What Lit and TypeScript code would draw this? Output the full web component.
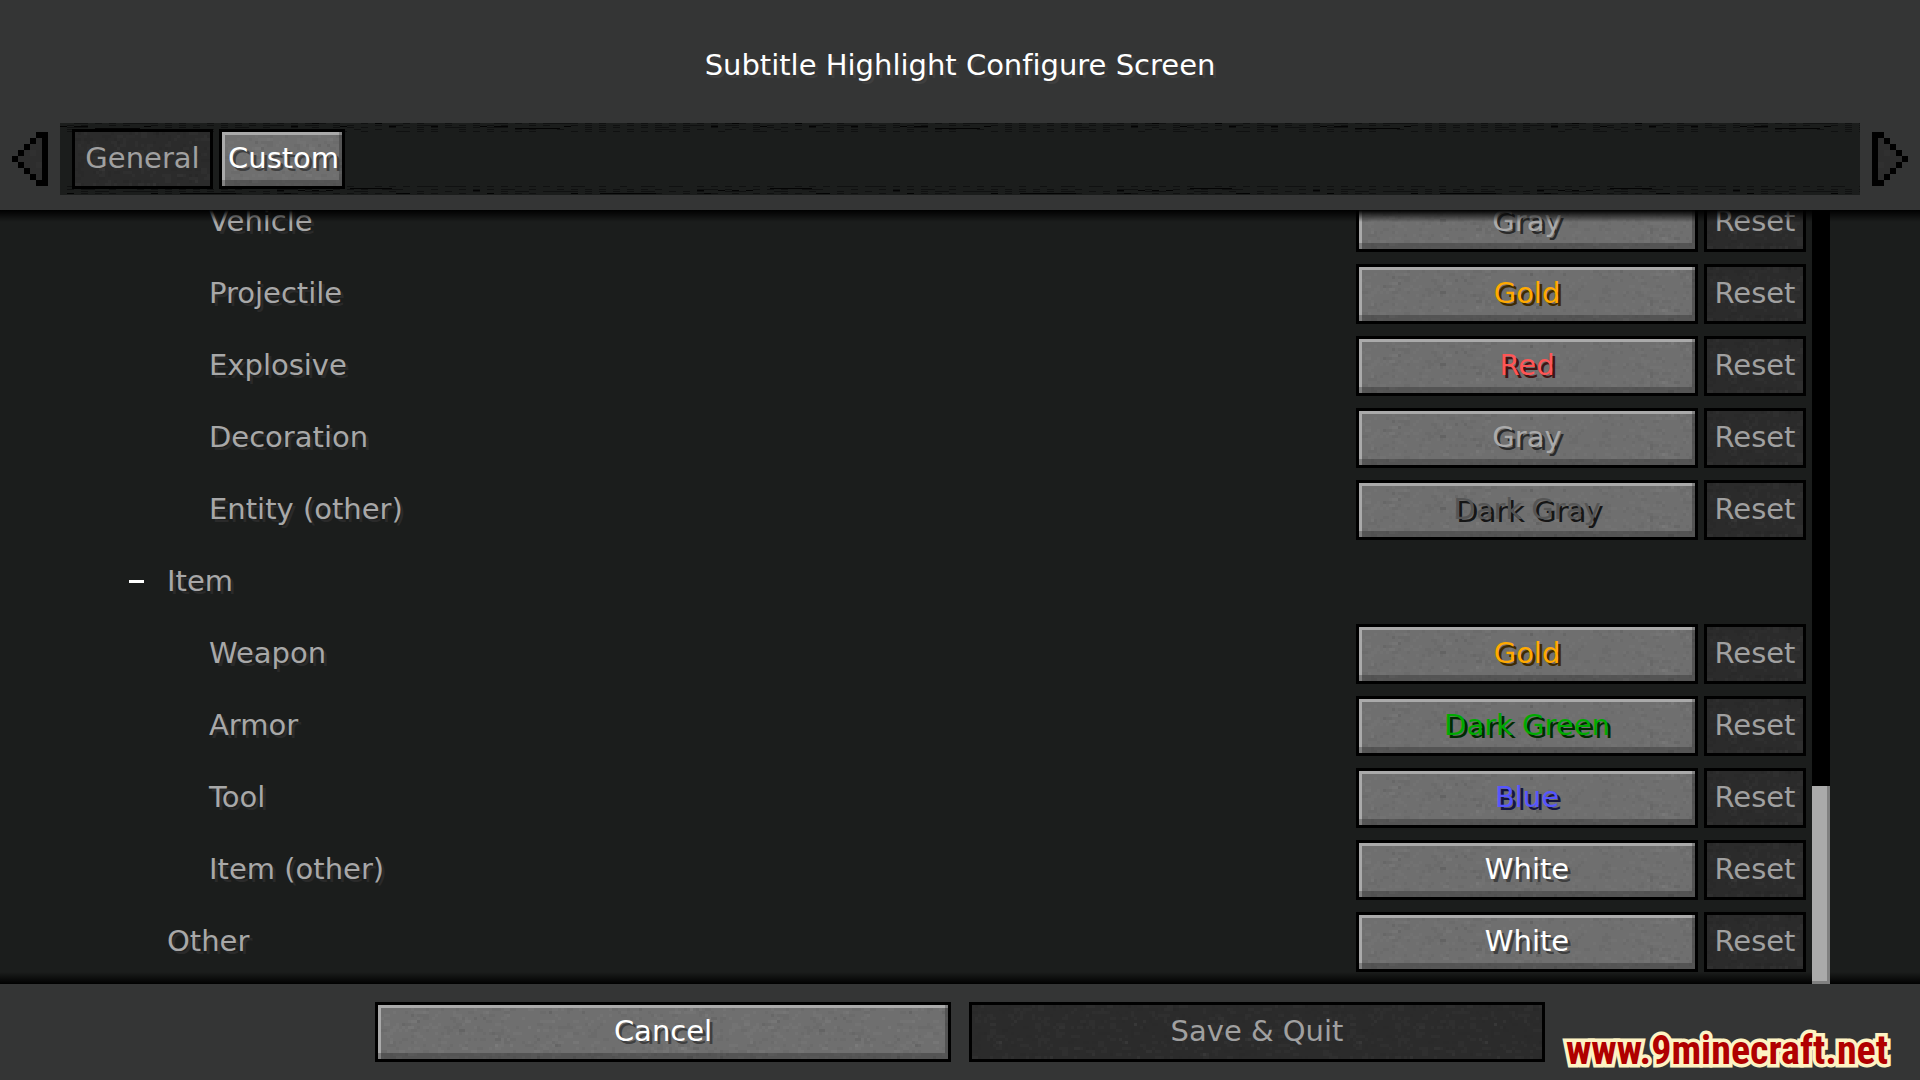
import { LitElement, html, css, svg, unsafeCSS } from "lit";
import { customElement, property, state } from "lit/decorators.js";

/* Seeded generator, so that the stone grain is the same on every load. */
function seeded(seed: number): () => number {
  let s = seed;
  return () => {
    s = (s * 1664525 + 1013904223) % 4294967296;
    return s / 4294967296;
  };
}

function svgUrl(width: number, height: number, body: string): string {
  const source = `<svg xmlns="http://www.w3.org/2000/svg" width="${width}" height="${height}" shape-rendering="crispEdges">${body}</svg>`;
  return `url("data:image/svg+xml,${encodeURIComponent(source)}")`;
}

/* Grain made of 3px blocks in light and dark shades. */
function stone(seed: number, strength: number): string {
  const rnd = seeded(seed);
  const shades = [
    { fill: "#000", opacity: 0.05, share: 0.16 },
    { fill: "#000", opacity: 0.1, share: 0.02 },
    { fill: "#fff", opacity: 0.04, share: 0.16 },
    { fill: "#fff", opacity: 0.07, share: 0.02 },
  ];
  let body = "";
  for (const shade of shades) {
    let d = "";
    for (let y = 0; y < 20; y++) {
      for (let x = 0; x < 120; x++) {
        if (rnd() < shade.share * 0.7) {
          const w = rnd() < 0.35 ? 6 : 3;
          d += `M${x * 3} ${y * 3}h${w}v3h-${w}z`;
        }
      }
    }
    body += `<path d="${d}" fill="${shade.fill}" fill-opacity="${shade.opacity * strength}"/>`;
  }
  return svgUrl(360, 60, body);
}

/* Short dashes along the upper and lower edge of the tab strip. */
function frayed(): string {
  const rnd = seeded(77);
  let faint = "";
  let strong = "";
  for (let x = 0; x < 420; x += 7) {
    const odd = (x / 7) % 2 === 1;
    for (const y of [0, 2, 4, 6, 8, 63, 66, 68, 70]) {
      if (rnd() < (odd ? 0.75 : 0.15)) faint += `M${x} ${y}h7v1h-7z`;
    }
    if (rnd() < 0.25) strong += `M${x} ${rnd() < 0.5 ? 0 : 3}h7v1h-7z`;
    if (rnd() < 0.2) strong += `M${x} ${rnd() < 0.5 ? 67 : 70}h7v1h-7z`;
  }
  strong += "M35 5h45v1h-45zM120 70h56v1h-56zM290 65h42v1h-42z";
  return svgUrl(
    420,
    72,
    `<path d="${faint}" fill="#000" fill-opacity=".4"/><path d="${strong}" fill="#000" fill-opacity=".85"/>`
  );
}

const stoneLight = unsafeCSS(stone(11, 0.7));
const stoneDark = unsafeCSS(stone(23, 0.5));
const strip = unsafeCSS(frayed());

@customElement("stone-button")
export class StoneButton extends LitElement {
  @property() tint = "white";
  @property() name = "";
  @property({ type: Boolean }) disabled = false;

  static styles = css`
    :host {
      display: block;
    }
    .button {
      display: block;
      box-sizing: border-box;
      width: 100%;
      height: 60px;
      margin: 0;
      padding: 0 6px 2px;
      border: 3px solid #000;
      border-radius: 0;
      background: #6f6f6f ${stoneLight};
      box-shadow: inset -3px -6px 0 rgba(0, 0, 0, 0.24), inset 3px 3px 0 #aaa;
      font: inherit;
      line-height: 48px;
      color: #fff;
      text-shadow: 3px 3px 0 #3f3f3f;
      text-align: center;
      white-space: nowrap;
      cursor: pointer;
    }
    .button:disabled {
      background: #2b2b2b ${stoneDark};
      box-shadow: none;
      color: #a0a0a0;
      text-shadow: none;
      cursor: default;
    }
    .gold {
      color: #ffaa00;
      text-shadow: 3px 3px 0 #3f2a00;
    }
    .red {
      color: #ff5555;
      text-shadow: 3px 3px 0 #3f1515;
    }
    .gray {
      color: #aaaaaa;
      text-shadow: 3px 3px 0 #2a2a2a;
    }
    .dark-gray {
      color: #555555;
      text-shadow: 3px 3px 0 #151515;
    }
    .dark-green {
      color: #00aa00;
      text-shadow: 3px 3px 0 #002a00;
    }
    .blue {
      color: #5555ff;
      text-shadow: 3px 3px 0 #15153f;
    }
  `;

  render() {
    return html`<button
      class="button ${this.tint}"
      type="button"
      aria-label=${this.name}
      ?disabled=${this.disabled}
    ><slot></slot></button>`;
  }
}

interface Entry {
  label: string;
  value?: string;
  level: 1 | 2;
}

@customElement("app-root")
export class AppRoot extends LitElement {
  @state() private entries: Entry[] = [
    { label: "Vehicle", value: "Gray", level: 2 },
    { label: "Projectile", value: "Gold", level: 2 },
    { label: "Explosive", value: "Red", level: 2 },
    { label: "Decoration", value: "Gray", level: 2 },
    { label: "Entity (other)", value: "Dark Gray", level: 2 },
    { label: "Item", level: 1 },
    { label: "Weapon", value: "Gold", level: 2 },
    { label: "Armor", value: "Dark Green", level: 2 },
    { label: "Tool", value: "Blue", level: 2 },
    { label: "Item (other)", value: "White", level: 2 },
    { label: "Other", value: "White", level: 1 },
  ];

  static styles = css`
    :host {
      display: flex;
      flex-direction: column;
      position: relative;
      height: 100vh;
      overflow: hidden;
      background: #1b1d1c;
      color: #fff;
      font-family: "DejaVu Sans", Verdana, sans-serif;
      font-size: 29px;
      font-variant-ligatures: none;
    }
    .header {
      flex: none;
      padding-bottom: 15px;
      background: #343535;
    }
    .title {
      margin: 0;
      padding: 35px 0 28px;
      font-size: 29px;
      font-weight: 400;
      line-height: 60px;
      text-align: center;
      text-shadow: 3px 3px 0 #3f3f3f;
    }
    .tabs {
      display: flex;
      align-items: center;
      gap: 12px;
      padding: 0 12px;
    }
    .arrow {
      flex: none;
      width: 36px;
      height: 54px;
      padding: 0;
      border: 0;
      background: none;
    }
    .arrow svg {
      display: block;
      width: 36px;
      height: 54px;
    }
    .strip {
      flex: 1;
      display: flex;
      gap: 6px;
      padding: 6px 12px;
      background: #1b1d1c ${strip};
    }
    .general {
      width: 141px;
    }
    .custom {
      width: 126px;
    }
    .body {
      flex: 1;
      min-height: 0;
      display: flex;
      position: relative;
    }
    .body::before,
    .body::after {
      content: "";
      position: absolute;
      left: 0;
      right: 0;
      height: 12px;
      pointer-events: none;
    }
    .body::before {
      top: 0;
      background: linear-gradient(#000, transparent);
    }
    .body::after {
      bottom: 0;
      background: linear-gradient(transparent, #000);
    }
    .list {
      flex: 1;
      min-width: 0;
      display: flex;
      flex-direction: column;
      justify-content: flex-end;
      gap: 12px;
      box-sizing: border-box;
      margin: 0;
      padding: 0 6px 12px 129px;
      overflow: hidden;
      list-style: none;
    }
    .row {
      flex: none;
      display: grid;
      grid-template-columns: 1fr 342px 102px;
      gap: 6px;
      height: 60px;
    }
    .label {
      display: flex;
      align-items: center;
      padding: 0 0 2px 38px;
      color: #a8a8a8;
      text-shadow: 3px 3px 0 #2a2a2a;
    }
    .nested {
      padding-left: 80px;
    }
    .foldable {
      padding-left: 0;
      gap: 23px;
    }
    .fold {
      width: 15px;
      height: 30px;
      padding: 0;
      border: 0;
      background: linear-gradient(#fff, #fff) center / 15px 3px no-repeat;
    }
    .track {
      flex: none;
      display: flex;
      flex-direction: column;
      justify-content: flex-end;
      z-index: 1;
      width: 18px;
      margin-right: 90px;
      background: #000;
    }
    .thumb {
      height: 25.6%;
      background: #aaa;
      box-shadow: inset -3px -3px 0 #808080;
    }
    .footer {
      flex: none;
      display: flex;
      justify-content: center;
      gap: 18px;
      padding: 18px 0;
      background: #343535;
    }
    .wide {
      flex: 0 1 576px;
    }
    .mark {
      position: absolute;
      right: 32px;
      bottom: 5px;
      color: #b00000;
      font: 700 40px/48px "Liberation Sans Narrow", "Roboto Condensed", "Open Sans Condensed", sans-serif;
      -webkit-text-stroke: 7px #fdf3c4;
      paint-order: stroke fill;
      text-decoration: none;
    }
  `;

  private arrow(direction: "left" | "right") {
    const flip = direction === "right" ? "translate(6 0) scale(-1 1)" : "";
    return html`<button class="arrow" type="button" aria-label="Scroll tabs ${direction}" disabled>
      <svg viewBox="0 0 6 9" shape-rendering="crispEdges" aria-hidden="true">
        ${svg`<g transform=${flip}>
          <path d="M4 1h1v7h-1v-1h-1v-1h-1v-1h-1v-1h1v-1h1v-1h1z" fill="#2d2d2d"/>
          <path d="M3 3h1v1h-1zM4 5h1v1h-1z" fill="#303030"/>
          <path d="M4 0h2v9h-2v-1h1v-7h-1zM3 1h1v1h-1zM2 2h1v1h-1zM1 3h1v1h-1zM0 4h1v1h-1zM1 5h1v1h-1zM2 6h1v1h-1zM3 7h1v1h-1z" fill="#000"/>
        </g>`}
      </svg>
    </button>`;
  }

  private row(entry: Entry) {
    if (!entry.value) {
      return html`<li class="row">
        <div class="label foldable">
          <button class="fold" type="button" aria-label="Collapse ${entry.label}" aria-expanded="true"></button>
          <span>${entry.label}</span>
        </div>
      </li>`;
    }
    return html`<li class="row">
      <span class="label ${entry.level === 2 ? "nested" : ""}">${entry.label}</span>
      <stone-button
        tint=${entry.value.toLowerCase().replace(" ", "-")}
        name="${entry.label}: ${entry.value}"
      >${entry.value}</stone-button>
      <stone-button name="Reset ${entry.label}" disabled>Reset</stone-button>
    </li>`;
  }

  render() {
    return html`
      <header class="header">
        <h1 class="title">Subtitle Highlight Configure Screen</h1>
        <nav class="tabs" aria-label="Categories">
          ${this.arrow("left")}
          <div class="strip">
            <stone-button class="general" name="General" disabled>General</stone-button>
            <stone-button class="custom" name="Custom">Custom</stone-button>
          </div>
          ${this.arrow("right")}
        </nav>
      </header>
      <main class="body">
        <ul class="list">${this.entries.map((entry) => this.row(entry))}</ul>
        <div class="track"><div class="thumb"></div></div>
      </main>
      <footer class="footer">
        <stone-button class="wide" name="Cancel">Cancel</stone-button>
        <stone-button class="wide" name="Save &amp; Quit" disabled>Save &amp; Quit</stone-button>
      </footer>
      <a class="mark" href="#">www.9minecraft.net</a>
    `;
  }
}
